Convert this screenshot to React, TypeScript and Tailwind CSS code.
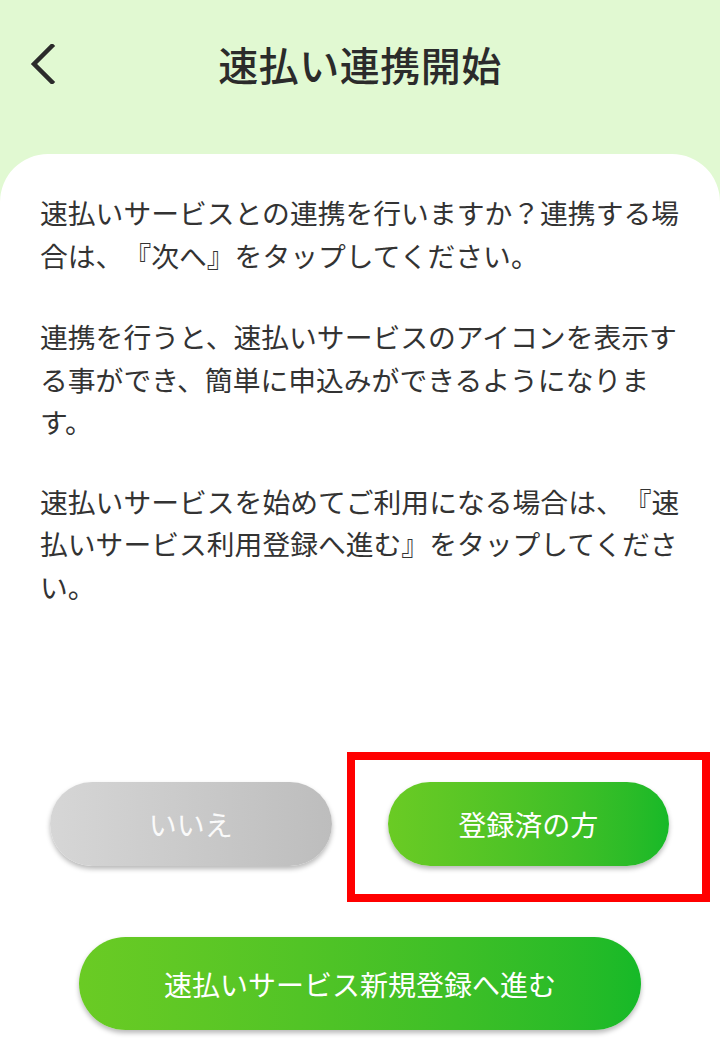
import React from 'react';

const font = { fontFamily: '"Noto Sans CJK JP", "Noto Sans", sans-serif' };

const App: React.FC = () => {
    return (
        <div className="min-h-[1059px] w-[720px] bg-[#e1f9d2] flex flex-col [text-spacing-trim:space-all]" style={font}>
            <header className="h-[128px] grid grid-cols-[100px_1fr_100px] items-center">
                <button className="h-full flex items-center pl-[30px]" aria-label="戻る">
                    <svg width="26" height="40" viewBox="0 0 26 40" fill="none">
                        <polyline points="22,2 4,20 22,38" stroke="#2b2b2b" strokeWidth="4.5" strokeLinecap="square" />
                    </svg>
                </button>
                <h1 className="text-center text-[40px] font-medium text-[#2b2b2b] tracking-[0.5px]">速払い連携開始</h1>
                <div />
            </header>

            <main className="mt-[26px] flex-1 bg-white rounded-t-[48px] flex flex-col">
                <div className="pt-[37px] pl-[40px] pr-[20px] text-[27.8px] leading-[42.5px] text-[#333333] whitespace-nowrap">
                    <p className="mb-[39px]">
                        速払いサービスとの連携を行いますか？連携する場<br />
                        合は、『次へ』をタップしてください。
                    </p>
                    <p className="mb-[37px]">
                        連携を行うと、速払いサービスのアイコンを表示す<br />
                        る事ができ、簡単に申込みができるようになりま<br />
                        す。
                    </p>
                    <p>
                        速払いサービスを始めてご利用になる場合は、『速<br />
                        払いサービス利用登録へ進む』をタップしてくださ<br />
                        い。
                    </p>
                </div>

                <div className="mt-[175px] grid grid-cols-2 pl-[22px] pr-[23px]">
                    <div className="flex justify-center">
                        <button className="w-[282px] h-[84px] rounded-full bg-gradient-to-r from-[#d6d6d6] to-[#bdbdbd] shadow-[0_3px_5px_rgba(0,0,0,0.28)] text-[28px] text-[#fafafa]">
                            いいえ
                        </button>
                    </div>
                    <div className="flex justify-center">
                        <div className="relative">
                            <button className="w-[281px] h-[84px] rounded-full bg-gradient-to-r from-[#6acb24] to-[#16b928] shadow-[0_3px_5px_rgba(0,0,0,0.28)] text-[28px] text-white">
                                登録済の方
                            </button>
                            <div className="absolute -left-[41px] -right-[41px] -top-[30px] -bottom-[36px] border-[8px] border-[#ff0000] pointer-events-none" />
                        </div>
                    </div>
                </div>

                <div className="mt-[71px] flex justify-center">
                    <button className="w-[562px] h-[93px] rounded-full bg-gradient-to-r from-[#6acb24] to-[#16b928] shadow-[0_3px_5px_rgba(0,0,0,0.28)] text-[28px] text-white">
                        速払いサービス新規登録へ進む
                    </button>
                </div>
            </main>
        </div>
    );
};

export default App;
